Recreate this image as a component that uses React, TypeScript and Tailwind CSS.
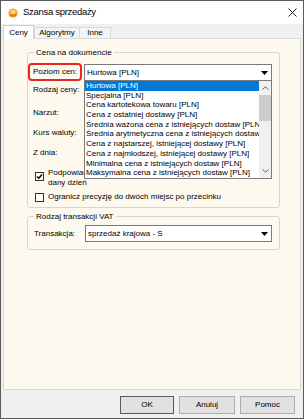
import React from "react";

const font = "font-['Liberation_Sans',Arial,sans-serif]";

const priceLevels = [
  "Hurtowa [PLN]",
  "Specjalna [PLN]",
  "Cena kartotekowa towaru [PLN]",
  "Cena z ostatniej dostawy [PLN]",
  "Średnia ważona cena z istniejących dostaw [PLN]",
  "Średnia arytmetyczna cena z istniejących dostaw [PLN]",
  "Cena z najstarszej, istniejącej dostawy [PLN]",
  "Cena z najmłodszej, istniejącej dostawy [PLN]",
  "Minimalna cena z istniejących dostaw [PLN]",
  "Maksymalna cena z istniejących dostaw [PLN]",
];

function AppIcon() {
  return (
    <svg width="10" height="10" viewBox="0 0 10 10">
      <circle cx="5" cy="5" r="4.6" fill="#f6a524" />
      <circle cx="5" cy="4" r="2.6" fill="#fcd66b" />
      <path d="M1.5 7.5 L4 5.5 L5.5 7 L8.5 5 L8.5 8.5 L1.5 8.5 Z" fill="#e8741c" />
    </svg>
  );
}

function Combo({ value }: { value: string }) {
  return (
    <div className="h-[17px] border border-[#7a7a7a] bg-white flex items-center pl-[2px] pr-[3px]">
      <span className="flex-1 whitespace-nowrap">{value}</span>
      <svg width="7" height="4" viewBox="0 0 7 4">
        <polygon points="0,0 7,0 3.5,4" fill="#000" />
      </svg>
    </div>
  );
}

function Checkbox({ checked }: { checked?: boolean }) {
  return (
    <div className="w-[9px] h-[9px] shrink-0 border border-[#333] bg-white flex items-center justify-center">
      {checked && (
        <svg width="7" height="7" viewBox="0 0 7 7">
          <polyline points="1,3.5 2.8,5.3 6,1.5" fill="none" stroke="#000" strokeWidth="1.4" />
        </svg>
      )}
    </div>
  );
}

function PriceList() {
  return (
    <div className="absolute left-0 right-0 top-[16px] z-10 h-[99px] border border-[#7a7a7a] bg-white flex">
      <div className="flex-1 min-w-0 overflow-hidden">
        {priceLevels.map((item, i) => (
          <div
            key={item}
            className={
              i === 0
                ? "h-[9.7px] leading-[9.7px] whitespace-nowrap pl-[1px] bg-[#0078d7] text-white"
                : "h-[9.7px] leading-[9.7px] whitespace-nowrap pl-[1px]"
            }
          >
            {item}
          </div>
        ))}
      </div>
      {/* scrollbar */}
      <div className="w-[12px] shrink-0 bg-[#f0f0f0] flex flex-col">
        <div className="h-[14px] flex items-center justify-center">
          <svg width="7" height="4" viewBox="0 0 7 4">
            <polyline points="0.5,3.5 3.5,0.8 6.5,3.5" fill="none" stroke="#606060" strokeWidth="1" />
          </svg>
        </div>
        <div className="h-[26px] bg-[#cdcdcd]" />
        <div className="flex-1" />
        <div className="h-[14px] flex items-center justify-center">
          <svg width="7" height="4" viewBox="0 0 7 4">
            <polyline points="0.5,0.5 3.5,3.2 6.5,0.5" fill="none" stroke="#606060" strokeWidth="1" />
          </svg>
        </div>
      </div>
    </div>
  );
}

export default function App() {
  return (
    <div
      className={`w-[304px] h-[419px] border border-[#5b5b5b] bg-[#f0f0f0] flex flex-col text-[8px] text-black ${font}`}
    >
      {/* Title bar */}
      <div className="h-[23px] shrink-0 bg-white flex items-center pl-[7px] pr-[6px]">
        <AppIcon />
        <span className="ml-[5px] text-[9.5px] tracking-[-0.3px]">Szansa sprzedaży</span>
        <svg className="ml-auto" width="9" height="9" viewBox="0 0 9 9">
          <path d="M0.5 0.5 L8.5 8.5 M8.5 0.5 L0.5 8.5" stroke="#222" strokeWidth="1" />
        </svg>
      </div>

      {/* Tabs */}
      <div className="h-[14px] shrink-0 flex items-end px-[2px]">
        <div className="relative z-10 -mb-px h-[14px] w-[31px] border border-b-0 border-[#d0d0d0] bg-white flex items-center justify-center">
          Ceny
        </div>
        <div className="h-[11px] w-[46px] border border-b-0 border-[#d9d9d9] bg-[#f4f4f4] flex items-center justify-center">
          Algorytmy
        </div>
        <div className="h-[11px] w-[31px] border border-b-0 border-l-0 border-[#d9d9d9] bg-[#f4f4f4] flex items-center justify-center">
          Inne
        </div>
      </div>

      {/* Tab page */}
      <div className="flex-1 mx-[2px] border border-[#d9d9d9] bg-[#fdf9ee] pt-[8px]">
        <fieldset className="ml-[23px] w-[253px] min-w-0 border border-[#d5d5d5] rounded-[3px] pb-[5px]">
          <legend className="ml-[6px] px-[2px] leading-[11px]">Cena na dokumencie</legend>
          <div className="pt-[5px]">
            <div className="flex items-start h-[18px] pr-[7px]">
              <div className="w-[56px] shrink-0">
                <div className="w-[54px] h-[18px] border-2 border-[#e5252a] rounded-[4px] flex items-center pl-[3px] whitespace-nowrap">
                  Poziom cen:
                </div>
              </div>
              <div className="relative flex-1 mt-[1px]">
                <Combo value="Hurtowa [PLN]" />
                <PriceList />
              </div>
            </div>
            <div className="h-[18px] flex items-center pl-[5px]">Rodzaj ceny:</div>
            <div className="mt-[4px] h-[20px] flex items-center pl-[5px]">Narzut:</div>
            <div className="h-[20px] flex items-center pl-[5px]">Kurs waluty:</div>
            <div className="h-[20px] flex items-center pl-[5px]">Z dnia:</div>
            <div className="mt-[5px] flex items-start pl-[7px]">
              <div className="mt-[4px]">
                <Checkbox checked />
              </div>
              <div className="ml-[4px] leading-[10px]">
                <div className="whitespace-nowrap">Podpowiadaj kurs waluty z tabeli NBP na</div>
                <div>dany dzień</div>
              </div>
            </div>
            <div className="mt-[4px] h-[10px] flex items-center pl-[7px]">
              <Checkbox />
              <span className="ml-[4px] whitespace-nowrap">
                Ogranicz precyzję do dwóch miejsc po przecinku
              </span>
            </div>
          </div>
        </fieldset>

        <fieldset className="mt-[3px] ml-[23px] w-[253px] min-w-0 border border-[#d5d5d5] rounded-[3px] pb-[7px]">
          <legend className="ml-[6px] px-[2px] leading-[11px]">Rodzaj transakcji VAT</legend>
          <div className="pt-[3px] flex items-center pr-[7px]">
            <div className="w-[57px] shrink-0 pl-[6px]">Transakcja:</div>
            <div className="flex-1">
              <Combo value="sprzedaż krajowa - S" />
            </div>
          </div>
        </fieldset>
      </div>

      {/* Buttons */}
      <div className="h-[28px] shrink-0 flex justify-end items-start gap-[5px] pt-[6px] pr-[8px]">
        <button className="w-[54px] h-[18px] border border-[#5a5a5a] bg-[#e1e1e1]">OK</button>
        <button className="w-[56px] h-[18px] border border-[#adadad] bg-[#e1e1e1]">Anuluj</button>
        <button className="w-[55px] h-[18px] border border-[#adadad] bg-[#e1e1e1]">Pomoc</button>
      </div>
    </div>
  );
}
